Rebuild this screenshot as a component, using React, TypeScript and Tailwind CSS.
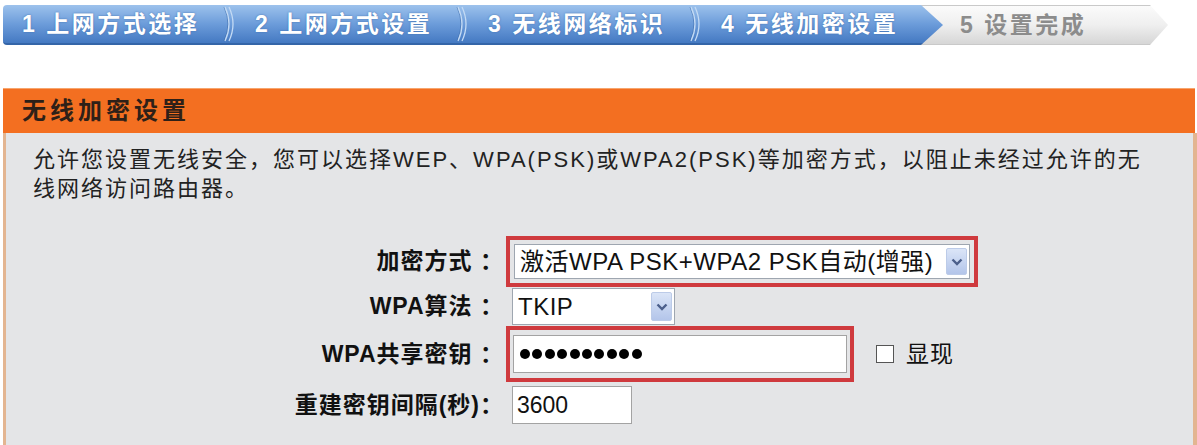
import React from "react";

const FONT = "font-['Liberation_Sans','Noto_Sans_CJK_SC',sans-serif]";

const steps = ["1 上网方式选择", "2 上网方式设置", "3 无线网络标识", "4 无线加密设置"];

function Separator() {
  return (
    <svg width="14" height="40" viewBox="0 0 14 40" className="ml-auto shrink-0">
      <path d="M2 3 Q10 20 2 37" fill="none" stroke="#2f5f9f" strokeWidth="1" opacity="0.5" />
      <path d="M3 3 Q11 20 3 37" fill="none" stroke="#c3daf4" strokeWidth="1.3" />
      <path d="M7 3 Q15 20 7 37" fill="none" stroke="#c3daf4" strokeWidth="1.3" />
    </svg>
  );
}

function SelectBox({ value, className }: { value: string; className: string }) {
  return (
    <div className={`flex items-center bg-white border border-[#9ea6b0] ${className}`}>
      <span className="flex-1 pl-[5px] text-[24px] leading-none tracking-[0.5px] text-[#111] whitespace-nowrap">
        {value}
      </span>
      <div className="mr-[2px] flex h-[calc(100%-6px)] w-[21px] items-center justify-center rounded-[2px] border border-[#bccbe8] bg-linear-to-b from-[#dbe5f7] to-[#b3c5ea]">
        <svg width="14" height="10" viewBox="0 0 14 10">
          <path d="M2.5 2.5 L7 7 L11.5 2.5" fill="none" stroke="#4b5f8b" strokeWidth="2.4" />
        </svg>
      </div>
    </div>
  );
}

export default function App() {
  return (
    <div className={`w-[1197px] h-[445px] overflow-hidden bg-white flex flex-col ${FONT}`}>
      {/* STEP BAR */}
      <div className="flex pt-[5px] pl-[3px]">
        <div className="relative z-10 flex h-[40px] w-[940px] rounded-l-[4px] border-b-[2px] border-[#3465a8] bg-linear-to-b from-[#9dc2ec] via-[#6c9cda] to-[#4479c2] [clip-path:polygon(0_0,918px_0,100%_50%,918px_100%,0_100%)]">
          {steps.map((s, i) => (
            <div key={s} className="flex w-[233px] items-center pl-[19px]">
              <span className="text-[23px] font-bold tracking-[2.5px] text-white whitespace-nowrap [text-shadow:0_0_2px_#3f6fae]">
                {s}
              </span>
              {i < 3 && <Separator />}
            </div>
          ))}
        </div>
        <div className="-ml-[24px] flex h-[40px] w-[249px] items-center pl-[41px] border-y border-[#c9c9c9] bg-linear-to-b from-[#fbfbfb] via-[#efefef] to-[#d6d6d6] [clip-path:polygon(0_0,calc(100%-18px)_0,100%_50%,calc(100%-18px)_100%,0_100%)]">
          <span className="text-[23px] font-bold tracking-[2.5px] text-[#8c8c8c] whitespace-nowrap">5 设置完成</span>
        </div>
      </div>

      {/* HEADER */}
      <div className="mt-[43px] ml-[3px] flex h-[45px] w-[1192px] items-center border-t border-[#f7a56d] bg-[#f36f21] pl-[19px]">
        <span className="text-[24px] font-bold tracking-[4px] text-[#2e2018]">无线加密设置</span>
      </div>

      {/* PANEL */}
      <div className="ml-[3px] w-[1194px] flex-1 border-l-[3px] border-r-[4px] border-[#e3b591] bg-[#e4e5e7] pt-[12px] pl-[27px]">
        <div className="text-[22px] leading-[29px] tracking-[2px] text-[#222]">
          <div className="whitespace-nowrap">
            允许您设置无线安全，您可以选择WEP、WPA(PSK)或WPA2(PSK)等加密方式，以阻止未经过允许的无
          </div>
          <div className="whitespace-nowrap">线网络访问路由器。</div>
        </div>

        <div className="mt-[33px] -ml-[27px] flex flex-col text-[23px] text-[#111]">
          {/* row 1 */}
          <div className="flex h-[51px] items-center">
            <div className="w-[498px] text-right font-bold tracking-[1px] whitespace-nowrap">加密方式 ：</div>
            <div className="ml-[2px] border-[4px] border-[#cf3a3e] p-[4px]">
              <SelectBox value="激活WPA PSK+WPA2 PSK自动(增强)" className="h-[35px] w-[456px]" />
            </div>
          </div>
          {/* row 2 */}
          <div className="flex h-[39px] items-center">
            <div className="w-[498px] text-right font-bold tracking-[1px] whitespace-nowrap">WPA算法 ：</div>
            <SelectBox value="TKIP" className="ml-[8px] h-[37px] w-[163px]" />
          </div>
          {/* row 3 */}
          <div className="flex h-[56px] items-center">
            <div className="w-[498px] text-right font-bold tracking-[1px] whitespace-nowrap">WPA共享密钥 ：</div>
            <div className="ml-[2px] border-[4px] border-[#cf3a3e] px-[3px] py-[5px]">
              <div className="flex h-[38px] w-[334px] items-center gap-[2.4px] border border-[#a3a3a3] bg-white pl-[6px]">
                {Array.from({ length: 10 }).map((_, i) => (
                  <div key={i} className="h-[10px] w-[10px] rounded-full bg-black" />
                ))}
              </div>
            </div>
            <div className="ml-[22px] h-[18px] w-[18px] border border-[#555] bg-white" />
            <span className="ml-[12px] tracking-[1px]">显现</span>
          </div>
          {/* row 4 */}
          <div className="flex h-[46px] items-center">
            <div className="w-[498px] text-right font-bold tracking-[1px] whitespace-nowrap">重建密钥间隔(秒)：</div>
            <div className="ml-[8px] flex h-[38px] w-[120px] items-center border border-[#a3a3a3] bg-white pl-[4px]">
              3600
            </div>
          </div>
        </div>
      </div>
    </div>
  );
}
